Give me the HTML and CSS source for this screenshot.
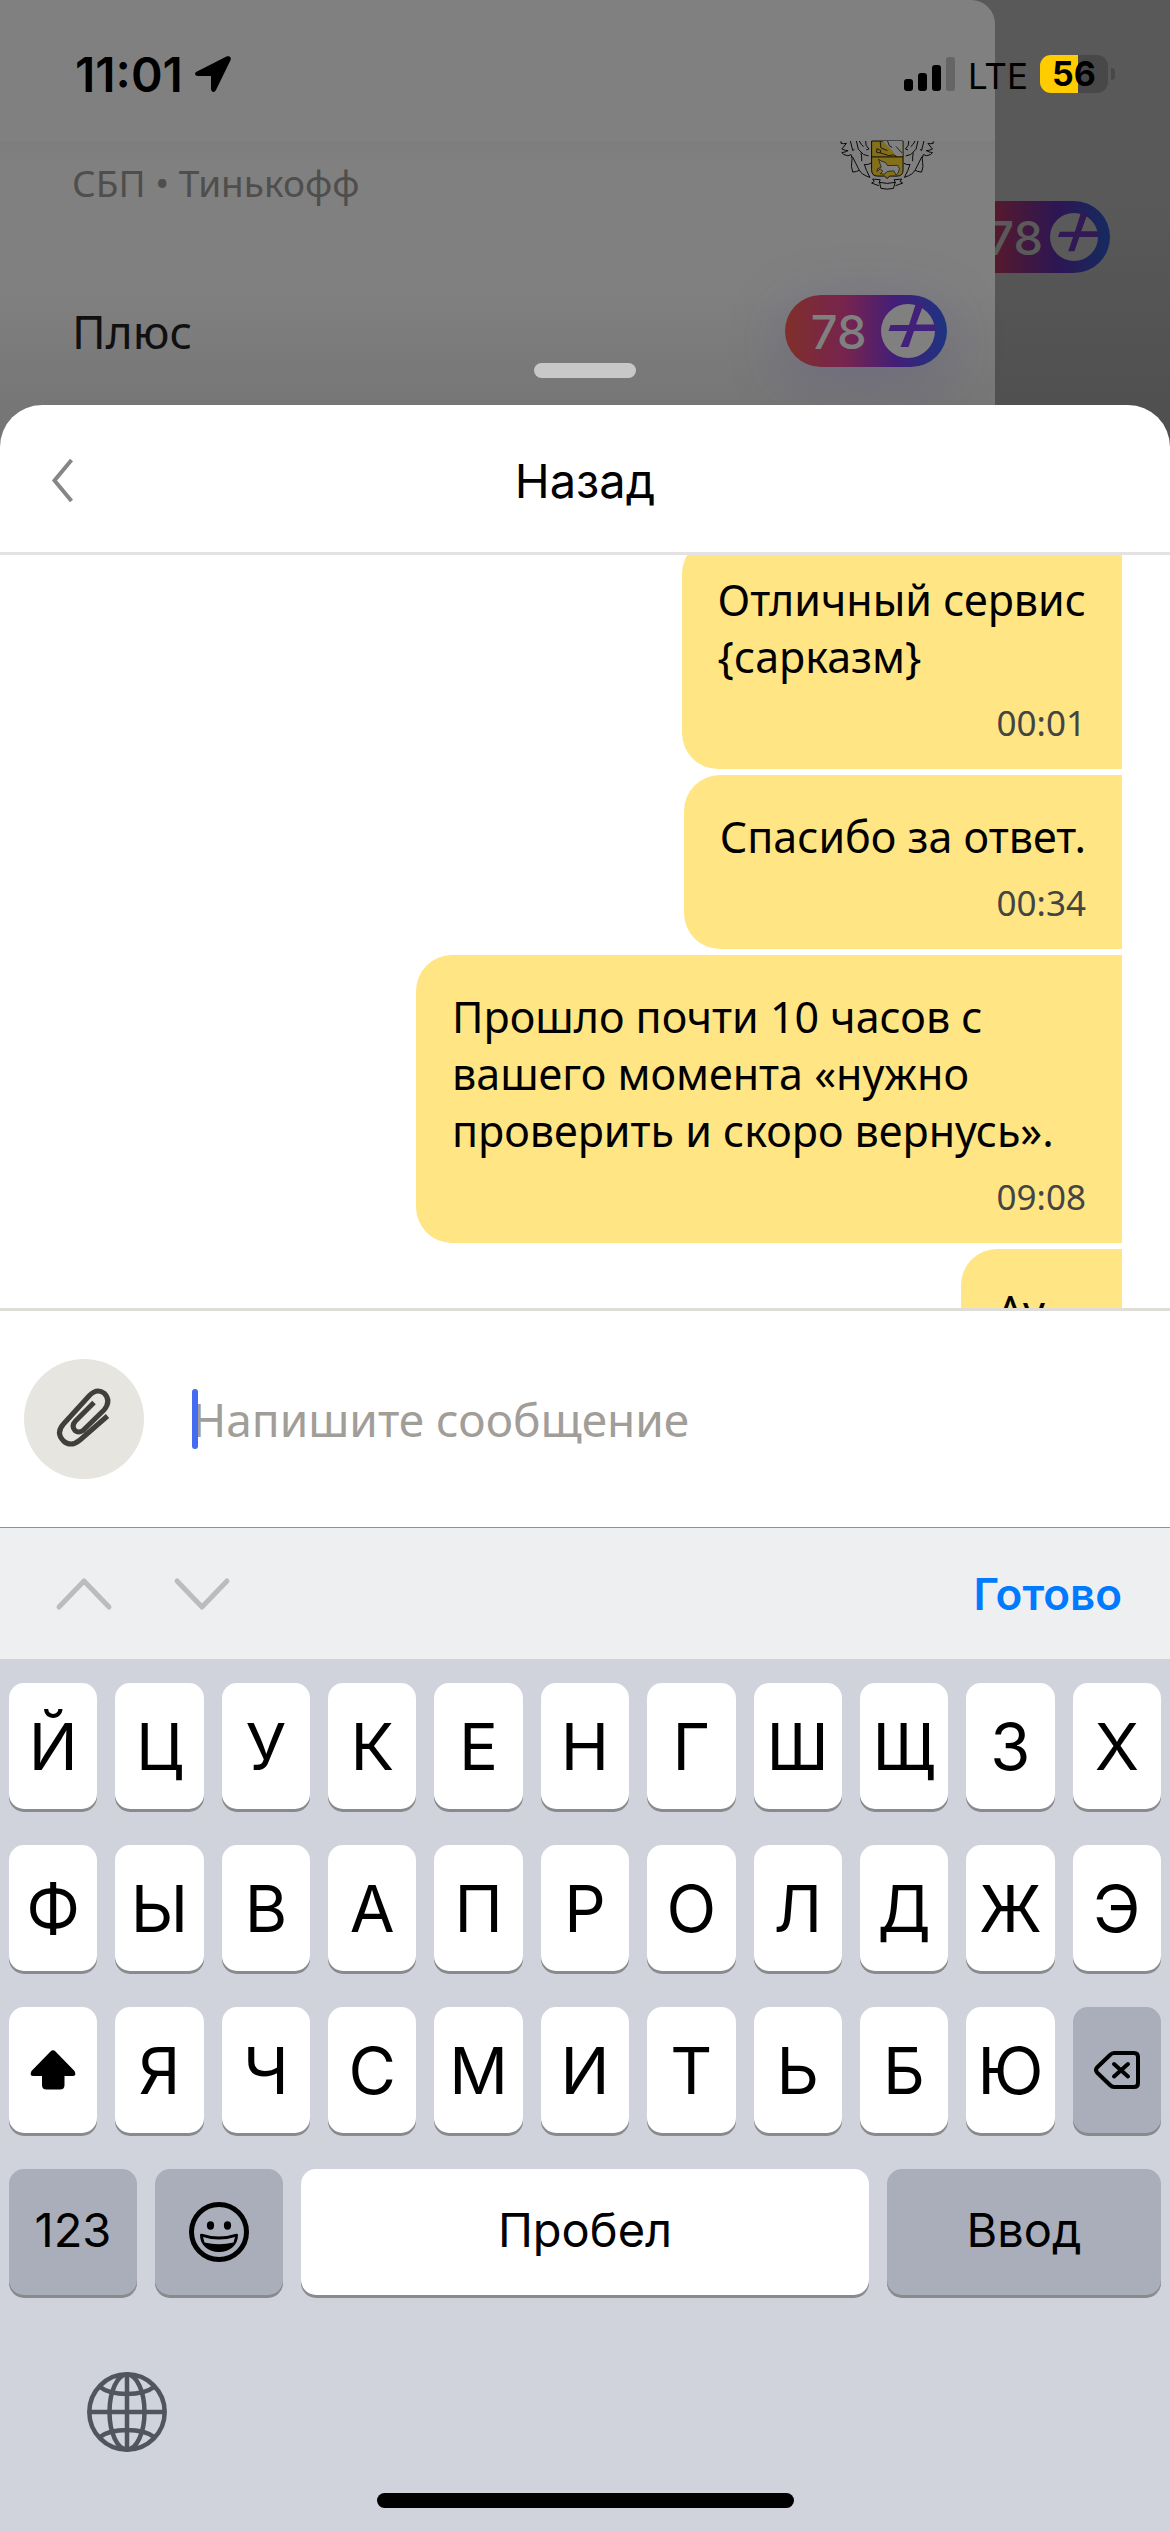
FILE: index.html
```html
<!DOCTYPE html>
<html lang="ru">
<head>
<meta charset="utf-8">
<meta name="viewport" content="width=device-width, initial-scale=1">
<title>Назад</title>
<link rel="stylesheet" href="styles.css">
</head>
<body>
<div class="backdrop">
  <section class="panel">
    <div class="panel-top"></div>
    <div class="row row-bank">
      <span class="bank">СБП • Тинькофф</span>
      <svg class="crest" viewBox="119 63 286 148" fill="none" stroke="#0a0a0a" stroke-width="3" stroke-linejoin="round">
        <path d="M214 63V150Q214 169 232 169H253L261 176L269 169H291Q309 169 309 150V63Z" fill="#85701a"/>
        <path d="M248 63L262 78L276 92L288 108H307V63Z" fill="#808080" stroke="none"/>
        <path d="M214 111H309"/>
        <path d="M240 63L242 84L262 92M230 86L229 97L240 99L266 107L281 105L290 110M230 86L242 92L240 99M262 63L268 78L276 82M288 80L306 99" stroke-width="2.5"/>
        <path d="M235 118L244 124L256 128L262 137H283L292 136L298 146L294 160L288 166L281 153L262 155L252 163L240 162L248 154L240 147L230 155L232 147L243 142Z" fill="#808080" stroke-width="2"/>
        <path d="M124 69L120 64M120 69Q130 73 138 70L127 84L124 87Q136 93 143 92Q135 97 124 98L130 104Q144 111 152 104Q157 116 154 128L153 140L157 157Q170 156 177 151Q182 164 209 173Q197 151 192 134Q203 136 212 130M150 63L157 92L162 88M177 63Q182 75 190 80M168 63L174 88L190 104L205 108M196 63Q194 78 206 87L198 90M156 110L176 150M182 98Q185 112 184 124"/>
        <path d="M398 69L402 64M402 69Q392 73 384 70L395 84L398 87Q386 93 379 92Q387 97 398 98L392 104Q378 111 370 104Q365 116 368 128L369 140L365 157Q352 156 345 151Q340 164 313 173Q325 151 330 134Q319 136 311 130M372 63L365 92L360 88M345 63Q340 75 332 80M354 63L348 88L332 104L317 108M326 63Q328 78 316 87L324 90M366 110L346 150M340 98Q337 112 338 124"/>
        <path d="M236 190L240 180L217 178L222 185L214 190L236 198M238 188Q261 194 285 188L280 206Q261 211 242 206ZM286 190L282 180L305 178L300 185L308 190L286 198"/>
      </svg>
    </div>
    <div class="row row-plus">
      <span class="plus-title">Плюс</span>
      <span class="pill">78
        <svg class="pill-icon" viewBox="0 0 54 54"><circle cx="27" cy="27" r="27" fill="#808080"/><path d="M35 -1L28 21H9.500L7.500 27H26L19.500 43H27.500L33 27H56V20.500H35L43 -1Z" fill="#41217a"/></svg>
      </span>
    </div>
  </section>
  <aside class="behind">
    <span class="pill pill-dim">78
      <svg class="pill-icon" viewBox="0 0 54 54"><circle cx="27" cy="27" r="27" fill="#5a5a5a"/><path d="M35 -1L28 21H11L9 27H26L20.500 43H27.500L33 27H56V20.500H35L43 -1Z" fill="#301955"/></svg>
    </span>
  </aside>
  <div class="statusbar">
    <time class="clock">11:01</time>
    <svg class="location" viewBox="0 0 36 36"><path d="M31.500 .6L2 15.500C-1 17-.3 20 3 20H16V32.500C16 36.500 19.500 37 21 34L35.600 4C36.700 1.300 34.200-.8 31.500 .6Z"/></svg>
    <svg class="signal" viewBox="0 0 51 34"><rect x="0" y="22" width="9" height="12" rx="3"/><rect x="14" y="16" width="9" height="18" rx="3"/><rect x="28" y="8" width="9" height="26" rx="3"/><rect x="42" y="0" width="9" height="34" rx="3" fill="#656565"/></svg>
    <span class="network">LTE</span>
    <span class="battery">56</span>
    <span class="battery-nub"></span>
  </div>
  <div class="handle"></div>
</div>

<main class="sheet">
  <header class="sheet-header">
    <button class="back" type="button" aria-label="Назад"><svg viewBox="0 0 22 42"><path d="M19.500 0L2.500 20.500L19.500 41" fill="none" stroke="#868686" stroke-width="4"/></svg></button>
    <h1>Назад</h1>
  </header>
  <div class="messages">
    <ol class="thread">
      <li class="bubble"><p>Отличный сервис<br>{сарказм}</p><time>00:01</time></li>
      <li class="bubble"><p>Спасибо за ответ.</p><time>00:34</time></li>
      <li class="bubble"><p>Прошло почти 10 часов с вашего момента «нужно проверить и скоро вернусь».</p><time>09:08</time></li>
      <li class="bubble"><p>Ау</p><time>09:08</time></li>
    </ol>
  </div>
  <form class="composer">
    <button class="attach" type="button" aria-label="Прикрепить файл">
      <svg viewBox="0 0 120 120" fill="none" stroke="#403f3c" stroke-width="5" stroke-linejoin="round"><path d="M83.500 57L56 81Q47 88.500 39.500 82Q31.500 74 39.500 65L65 37Q73 28.500 80.500 34.500Q87.500 42 80 51L59 71.500Q54.500 74.500 51 71.500Q47 67 51.500 62L70 43.500"/></svg>
    </button>
    <label class="field">
      <input type="text" placeholder="Напишите сообщение" aria-label="Сообщение">
      <span class="caret"></span>
    </label>
  </form>
</main>

<section class="keyboard">
  <div class="accessory">
    <button type="button" aria-label="Предыдущее поле"><svg viewBox="0 0 56 34"><path d="M3 30L28 4L53 30"/></svg></button>
    <button type="button" aria-label="Следующее поле"><svg viewBox="0 0 56 34"><path d="M3 4L28 30L53 4"/></svg></button>
    <button class="done" type="button">Готово</button>
  </div>
  <div class="keys">
    <div class="key-row">
      <button class="key">Й</button><button class="key">Ц</button><button class="key">У</button><button class="key">К</button><button class="key">Е</button><button class="key">Н</button><button class="key">Г</button><button class="key">Ш</button><button class="key">Щ</button><button class="key">З</button><button class="key">Х</button>
    </div>
    <div class="key-row">
      <button class="key">Ф</button><button class="key">Ы</button><button class="key">В</button><button class="key">А</button><button class="key">П</button><button class="key">Р</button><button class="key">О</button><button class="key">Л</button><button class="key">Д</button><button class="key">Ж</button><button class="key">Э</button>
    </div>
    <div class="key-row">
      <button class="key" aria-label="Shift"><svg width="46" height="40" viewBox="0 0 46 40"><path d="M20.500 1.500Q23-1 25.500 1.500L44.500 21Q47 26 42.500 26H34.500V35Q34.500 39.500 30 39.500H16.500Q12 39.500 12 35V26H3.500Q-1 26 1.500 21Z"/></svg></button><button class="key">Я</button><button class="key">Ч</button><button class="key">С</button><button class="key">М</button><button class="key">И</button><button class="key">Т</button><button class="key">Ь</button><button class="key">Б</button><button class="key">Ю</button><button class="key key-dark" aria-label="Удалить"><svg width="46" height="38" viewBox="0 0 46 38" fill="none" stroke="#000" stroke-width="4" stroke-linecap="round" stroke-linejoin="round"><path d="M20 2H40Q44 2 44 6V32Q44 36 40 36H20Q18 36 16 34L3 21.500Q1 19 3 16.500L16 4Q18 2 20 2ZM20 13L34 25.500M34 13L20 25.500"/></svg></button>
    </div>
    <div class="key-row key-row-last">
      <button class="key key-dark key-word">123</button>
      <button class="key key-dark" aria-label="Эмодзи"><svg width="60" height="60" viewBox="0 0 60 60"><circle cx="30" cy="30" r="27.500" fill="none" stroke="#000" stroke-width="5"/><ellipse cx="21.500" cy="23.500" rx="3.600" ry="4.200"/><ellipse cx="38.500" cy="23.500" rx="3.600" ry="4.200"/><path d="M11 33Q11 31 14 32Q30 37 46 32Q49 31 49 33C49 43 41 50 30 50S11 43 11 33Z"/><path d="M14 35Q30 40 46 35L44.500 40.500Q30 44 15.500 40.500Z" fill="#a9aeba"/></svg></button>
      <button class="key key-word">Пробел</button>
      <button class="key key-dark key-word">Ввод</button>
    </div>
  </div>
  <div class="keyboard-foot">
    <button class="globe" type="button" aria-label="Сменить язык"><svg viewBox="0 0 80 80" fill="none" stroke="#50555e" stroke-width="4.500"><circle cx="40" cy="40" r="37.700"/><path d="M2 40H78M40 2V78M13 15Q22 22 40 22T67 15M13 65Q22 58 40 58T67 65"/><ellipse cx="40" cy="40" rx="17.500" ry="37.500"/></svg></button>
  </div>
  <div class="home-indicator"></div>
</section>
</body>
</html>
```
FILE: styles.css
```css
* { box-sizing: border-box; }

body {
  margin: 0;
  height: 100vh;
  display: flex;
  flex-direction: column;
  overflow: hidden;
  background: #d0d3db;
  color: #000;
  font-family: "Noto Sans", sans-serif;
}

button {
  margin: 0;
  padding: 0;
  border: 0;
  background: none;
  color: inherit;
  font-family: inherit;
}

svg { display: block; overflow: visible; }

/* dimmed screens under the sheet */
.backdrop {
  position: relative;
  display: flex;
  flex: none;
  height: 465px;
  margin-bottom: -60px;
  background: linear-gradient(#595959 200px, #505050 405px);
}

.panel {
  width: 85%;
  border-top-right-radius: 24px;
  background: linear-gradient(#808080 290px, #767676 405px);
}

.panel-top { height: 141px; }

.row {
  display: flex;
  justify-content: space-between;
  padding: 0 48px 0 72px;
}

.row-bank {
  height: 154px;
  align-items: flex-start;
  padding-right: 60px;
  background: linear-gradient(#7d7d7d, #808080 24px);
}

.bank {
  padding-top: 15px;
  color: #4f4e4c;
  font-size: 37px;
  line-height: 54px;
}

.crest { width: 95px; height: 49px; }

.row-plus { align-items: center; }

.plus-title {
  color: #101010;
  font-size: 46px;
  line-height: 70px;
}

.pill {
  display: flex;
  flex: none;
  align-items: center;
  justify-content: flex-end;
  gap: 14px;
  width: 162px;
  height: 72px;
  padding-right: 12px;
  border-radius: 36px;
  background: linear-gradient(90deg, #802f2a, #76244f 38%, #431e78 68%, #1d3481);
  box-shadow: 0 12px 60px rgba(70, 60, 140, .25);
  color: #808080;
  font-family: Inter, sans-serif;
  font-size: 47px;
  font-weight: 500;
}

.pill-icon { width: 54px; height: 54px; overflow: hidden; }

.behind {
  display: flex;
  flex: 1;
  justify-content: flex-end;
  overflow: hidden;
  padding: 201px 60px 0 0;
}

.pill-dim {
  gap: 7px;
  background: linear-gradient(90deg, #5c1f1e, #55192e 30%, #2c1654 68%, #152b60);
  box-shadow: none;
  color: #5a5a5a;
}

.pill-dim .pill-icon { width: 48px; height: 48px; }

.statusbar {
  position: absolute;
  top: 46px;
  left: 0;
  right: 0;
  display: flex;
  align-items: center;
  height: 56px;
  padding: 0 55px 0 75px;
  font-family: Inter, sans-serif;
}

.clock { font-size: 48px; font-weight: 600; }
.location { width: 36px; height: 36px; margin-left: 12px; }
.signal { width: 51px; height: 34px; margin-left: auto; }
.network { margin: 4px 12px 0 13px; font-size: 35px; font-weight: 400; }

.battery {
  width: 68px;
  height: 38px;
  border-radius: 11px;
  background: linear-gradient(90deg, #fc0 38px, #484848 38px);
  font-size: 34px;
  font-weight: 700;
  line-height: 38px;
  text-align: center;
}

.battery-nub {
  width: 4px;
  height: 12px;
  margin-left: 3px;
  border-radius: 0 6px 6px 0;
  background: #484848;
}

.handle {
  position: absolute;
  top: 363px;
  left: 50%;
  width: 102px;
  height: 15px;
  margin-left: -51px;
  border-radius: 8px;
  background: #c8c8c8;
}

/* chat sheet */
.sheet {
  position: relative;
  display: flex;
  flex: 1;
  flex-direction: column;
  min-height: 0;
  border-radius: 42px 42px 0 0;
  background: #fff;
}

.sheet-header {
  display: grid;
  grid-template-columns: 120px 1fr 120px;
  align-items: center;
  height: 150px;
  padding-top: 4px;
  border-bottom: 3px solid #e3e3e3;
}

.back { height: 100%; padding-left: 52px; }
.back svg { width: 22px; height: 42px; }

.sheet-header h1 {
  margin: 0;
  font-family: Inter, sans-serif;
  font-size: 47px;
  font-weight: 400;
  text-align: center;
}

.messages {
  flex: 1;
  min-height: 0;
  overflow: hidden;
}

.thread {
  display: flex;
  flex-direction: column;
  align-items: flex-end;
  gap: 6px;
  margin: -17px 48px 0;
  padding: 0;
  list-style: none;
}

.bubble {
  display: flex;
  flex-direction: column;
  max-width: 706px;
  padding: 33px 36px 25px;
  border-radius: 36px 0 0 36px;
  background: #ffe583;
}

.bubble p {
  margin: 0 0 17px;
  font-size: 43px;
  line-height: 57px;
}

.bubble time {
  align-self: flex-end;
  color: #444;
  font-size: 35px;
  line-height: 42px;
}

.composer {
  display: flex;
  align-items: center;
  gap: 48px;
  height: 219px;
  padding: 0 24px;
  border-top: 3px solid #dfddd8;
}

.attach {
  width: 120px;
  height: 120px;
  border-radius: 50%;
  background: #e6e5e0;
}

.field { position: relative; flex: 1; }

.field input {
  width: 100%;
  padding: 0;
  border: 0;
  outline: 0;
  background: none;
  font-family: inherit;
  font-size: 46px;
  line-height: 60px;
}

.field input::placeholder { color: #a19d98; opacity: 1; }

.caret {
  position: absolute;
  top: 50%;
  left: 0;
  width: 6px;
  height: 60px;
  margin-top: -30px;
  border-radius: 3px;
  background: #456bf0;
}

/* on-screen keyboard */
.keyboard {
  flex: none;
  font-family: Inter, sans-serif;
}

.accessory {
  display: flex;
  align-items: center;
  gap: 62px;
  height: 132px;
  padding: 0 48px 0 56px;
  border-top: 1px solid #8f9296;
  background: #eeeff1;
}

.accessory svg {
  width: 56px;
  height: 34px;
  fill: none;
  stroke: #bcbcbc;
  stroke-width: 5;
  stroke-linecap: round;
  stroke-linejoin: round;
}

.done {
  margin-left: auto;
  color: #007aff;
  font-size: 44px;
  font-weight: 600;
}

.keys {
  display: flex;
  flex-direction: column;
  gap: 36px;
  padding: 24px 9px 0;
}

.key-row {
  display: grid;
  grid-template-columns: repeat(11, 1fr);
  gap: 18px;
}

.key-row-last { grid-template-columns: 128px 128px 1fr 274px; }

.key {
  display: flex;
  align-items: center;
  justify-content: center;
  height: 126px;
  border-radius: 15px;
  background: #fff;
  box-shadow: 0 3px 0 #898a8d;
  font-size: 65px;
}

.key-dark { background: #a9aeba; }
.key-word { padding-bottom: 5px; font-size: 47px; }

.keyboard-foot { padding: 77px 87px 41px; }
.globe, .globe svg { width: 80px; height: 80px; display: block; }

.home-indicator {
  width: 417px;
  height: 15px;
  margin: 0 auto 24px;
  border-radius: 8px;
  background: #000;
}
```
